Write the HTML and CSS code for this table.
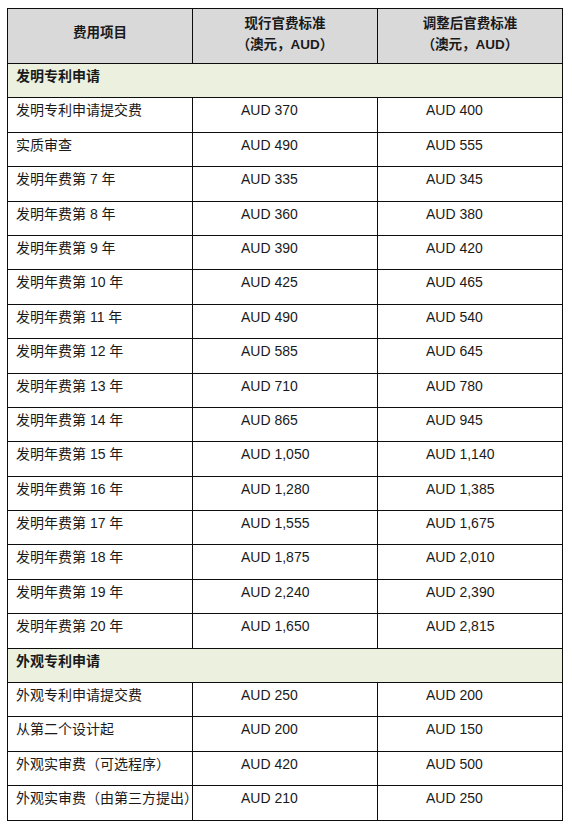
FILE: index.html
```html
<!DOCTYPE html>
<html lang="zh-CN">
<head>
<meta charset="utf-8">
<title>费用</title>
<link rel="stylesheet" href="styles.css">
</head>
<body>
<table class="fees">
  <colgroup><col class="c1"><col class="c2"><col class="c3"></colgroup>
  <thead>
    <tr class="head">
      <th class="h-single">费用项目</th>
      <th>现行官费标准<br>（澳元，AUD）</th>
      <th>调整后官费标准<br>（澳元，AUD）</th>
    </tr>
  </thead>
  <tbody>
    <tr class="section"><td colspan="3">发明专利申请</td></tr>
    <tr><td>发明专利申请提交费</td><td class="amt">AUD 370</td><td class="amt">AUD 400</td></tr>
    <tr><td>实质审查</td><td class="amt">AUD 490</td><td class="amt">AUD 555</td></tr>
    <tr><td>发明年费第 7 年</td><td class="amt">AUD 335</td><td class="amt">AUD 345</td></tr>
    <tr><td>发明年费第 8 年</td><td class="amt">AUD 360</td><td class="amt">AUD 380</td></tr>
    <tr><td>发明年费第 9 年</td><td class="amt">AUD 390</td><td class="amt">AUD 420</td></tr>
    <tr><td>发明年费第 10 年</td><td class="amt">AUD 425</td><td class="amt">AUD 465</td></tr>
    <tr><td>发明年费第 11 年</td><td class="amt">AUD 490</td><td class="amt">AUD 540</td></tr>
    <tr><td>发明年费第 12 年</td><td class="amt">AUD 585</td><td class="amt">AUD 645</td></tr>
    <tr><td>发明年费第 13 年</td><td class="amt">AUD 710</td><td class="amt">AUD 780</td></tr>
    <tr><td>发明年费第 14 年</td><td class="amt">AUD 865</td><td class="amt">AUD 945</td></tr>
    <tr><td>发明年费第 15 年</td><td class="amt">AUD 1,050</td><td class="amt">AUD 1,140</td></tr>
    <tr><td>发明年费第 16 年</td><td class="amt">AUD 1,280</td><td class="amt">AUD 1,385</td></tr>
    <tr><td>发明年费第 17 年</td><td class="amt">AUD 1,555</td><td class="amt">AUD 1,675</td></tr>
    <tr><td>发明年费第 18 年</td><td class="amt">AUD 1,875</td><td class="amt">AUD 2,010</td></tr>
    <tr><td>发明年费第 19 年</td><td class="amt">AUD 2,240</td><td class="amt">AUD 2,390</td></tr>
    <tr><td>发明年费第 20 年</td><td class="amt">AUD 1,650</td><td class="amt">AUD 2,815</td></tr>
    <tr class="section"><td colspan="3">外观专利申请</td></tr>
    <tr><td>外观专利申请提交费</td><td class="amt">AUD 250</td><td class="amt">AUD 200</td></tr>
    <tr><td>从第二个设计起</td><td class="amt">AUD 200</td><td class="amt">AUD 150</td></tr>
    <tr><td>外观实审费（可选程序）</td><td class="amt">AUD 420</td><td class="amt">AUD 500</td></tr>
    <tr><td>外观实审费（由第三方提出）</td><td class="amt">AUD 210</td><td class="amt">AUD 250</td></tr>
  </tbody>
</table>
</body>
</html>
```
FILE: styles.css
```css
html, body {
  margin: 0;
  padding: 0;
  background: #ffffff;
}
body {
  padding: 8px 0 0 7px;
  font-family: "Liberation Sans", "Noto Sans CJK SC", sans-serif;
  color: #1a1a1a;
}
.fees {
  border-collapse: collapse;
  table-layout: fixed;
  width: 555px;
  font-size: 14px;
}
.fees .c1 { width: 185px; }
.fees .c2 { width: 185px; }
.fees .c3 { width: 185px; }
.fees th, .fees td {
  border: 1px solid #0d0d0d;
  padding: 0;
}
.head th {
  background: #d9d9d9;
  height: 55px;
  font-size: 13.5px;
  font-weight: bold;
  line-height: 21px;
  text-align: center;
  vertical-align: top;
  padding-top: 4px;
  box-sizing: border-box;
}
.head th.h-single {
  padding-top: 13px;
}
.fees td {
  height: 34.4px;
  box-sizing: border-box;
  vertical-align: top;
  line-height: 18px;
  padding: 3px 0 0 8px;
  font-size: 14px;
  white-space: nowrap;
}
.fees td.amt {
  padding-left: 48px;
}
.section td {
  background: #ebf1de;
  font-weight: bold;
}
```
